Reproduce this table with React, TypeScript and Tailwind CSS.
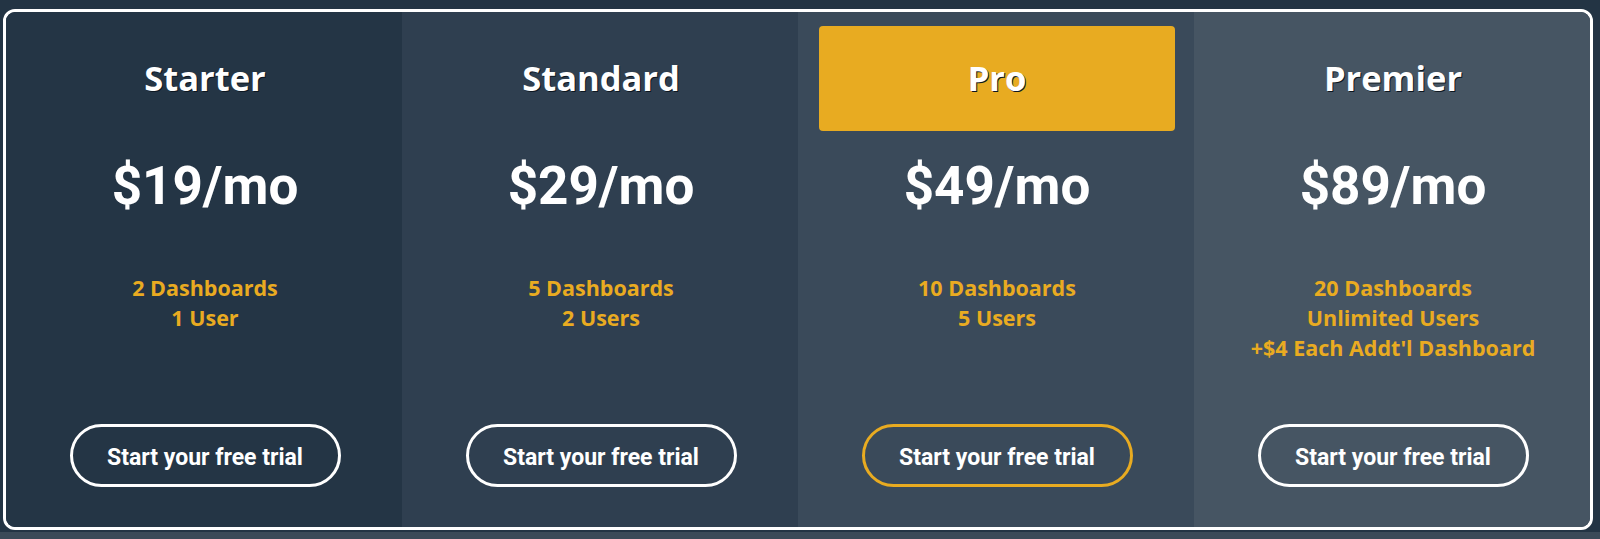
const plans = [
  {
    name: "Starter",
    price: "$19/mo",
    features: ["2 Dashboards", "1 User"],
    bg: "bg-[#243545]",
    featured: false,
  },
  {
    name: "Standard",
    price: "$29/mo",
    features: ["5 Dashboards", "2 Users"],
    bg: "bg-[#2f3f50]",
    featured: false,
  },
  {
    name: "Pro",
    price: "$49/mo",
    features: ["10 Dashboards", "5 Users"],
    bg: "bg-[#3a4a5a]",
    featured: true,
  },
  {
    name: "Premier",
    price: "$89/mo",
    features: ["20 Dashboards", "Unlimited Users", "+$4 Each Addt'l Dashboard"],
    bg: "bg-[#465563]",
    featured: false,
  },
];

function PlanColumn({ plan }: { plan: (typeof plans)[number] }) {
  return (
    <div className={`flex flex-col items-center pt-[14px] pb-[40px] pl-[21px] pr-[19px] ${plan.bg}`}>
      <div
        className={`w-full h-[105px] flex items-center justify-center rounded-[4px] ${
          plan.featured ? "bg-[#e8ab21]" : ""
        }`}
      >
        <h2 className="font-['Open_Sans',sans-serif] font-bold text-[34.5px] leading-none text-white [text-shadow:1px_1px_0_#0d1721]">
          {plan.name}
        </h2>
      </div>
      <div className="mt-[29px] font-['Roboto',sans-serif] font-bold text-[53px] leading-none text-white">
        {plan.price}
      </div>
      <ul className="mt-[60px] text-center font-['Open_Sans',sans-serif] font-bold text-[21.5px] leading-[30px] text-[#e9ab21]">
        {plan.features.map((f) => (
          <li key={f}>{f}</li>
        ))}
      </ul>
      <button
        className={`mt-auto w-[271px] h-[63px] pt-[3px] rounded-full border-[3px] font-['Roboto',sans-serif] font-bold text-[23px] leading-none text-white ${
          plan.featured ? "border-[#e8ab21]" : "border-white"
        }`}
      >
        Start your free trial
      </button>
    </div>
  );
}

export default function App() {
  return (
    <div className="w-[1600px] h-[539px] bg-[#233444] flex flex-col">
      <div className="pt-[9px] pl-[3px] pr-[7px] h-[532px]">
        <div className="h-[521px] w-[1590px] border-[3px] border-white rounded-[12px] overflow-hidden grid grid-cols-4">
          {plans.map((p) => (
            <PlanColumn key={p.name} plan={p} />
          ))}
        </div>
      </div>
      <div className="flex-1 bg-[#3b4a58]" />
    </div>
  );
}
